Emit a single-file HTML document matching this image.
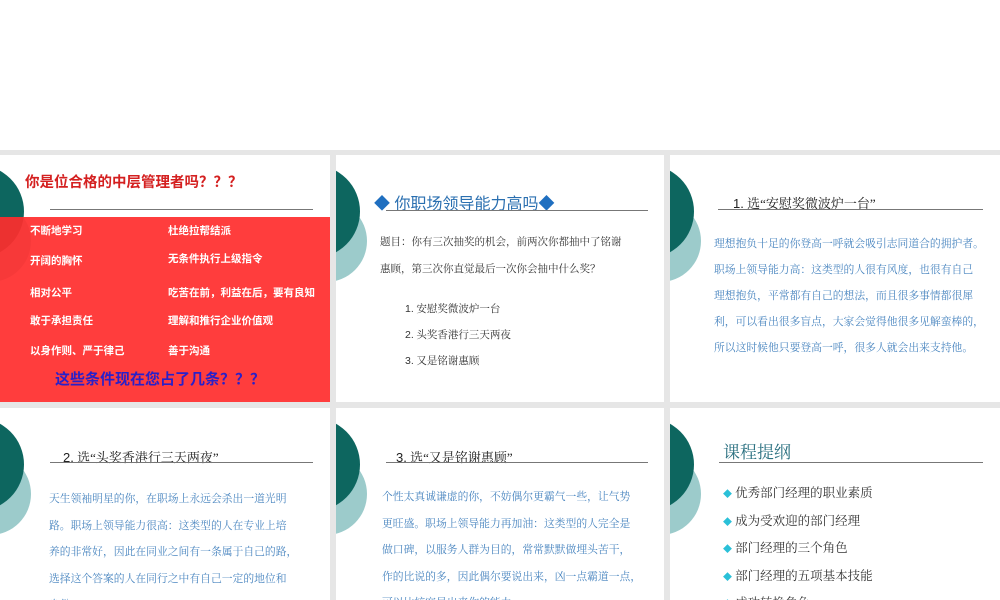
<!DOCTYPE html>
<html><head><meta charset="utf-8"><style>
*{margin:0;padding:0;box-sizing:border-box}
body{width:1000px;height:600px;background:#fff;position:relative;overflow:hidden;font-family:"Liberation Serif","Noto Serif CJK SC","Noto Sans CJK SC",serif}
.bg{position:absolute;left:0;top:150px;width:1000px;height:450px;background:#e6e6e6}
.s{position:absolute;background:#fff;overflow:hidden}
.c1{position:absolute;width:82px;height:82px;border-radius:50%;background:#9ccbcb;left:-51px;top:45px}
.c2{position:absolute;width:93px;height:93px;border-radius:50%;background:#0d665f;left:-69px;top:10px}
.t{position:absolute;white-space:nowrap}
.ln{position:absolute;height:1px;background:#777}
.b{color:#4a86c0;font-size:10.8px}
.sans{font-family:"Liberation Sans","Noto Sans CJK SC",sans-serif}
</style></head><body>
<div class="bg"></div>

<!-- slide 1 -->
<div class="s" style="left:0;top:155px;width:330px;height:247px">
<div class="c1"></div><div class="c2"></div>
<div class="t sans" style="left:25px;top:16px;font-size:14.5px;font-weight:bold;color:#d42020">你是位合格的中层管理者吗？？？</div>
<div class="ln" style="left:50px;top:54px;width:263px"></div>
<div style="position:absolute;left:0;top:62px;width:330px;height:185px;background:rgba(255,45,45,0.92)"></div>
<div class="sans" style="position:absolute;left:0;top:0;color:#fff;font-size:10.5px;font-weight:bold">
<div class="t" style="left:30px;top:68px">不断地学习</div>
<div class="t" style="left:168px;top:68px">杜绝拉帮结派</div>
<div class="t" style="left:30px;top:98px">开阔的胸怀</div>
<div class="t" style="left:168px;top:96px">无条件执行上级指令</div>
<div class="t" style="left:30px;top:130px">相对公平</div>
<div class="t" style="left:168px;top:130px">吃苦在前，利益在后，要有良知</div>
<div class="t" style="left:30px;top:158px">敢于承担责任</div>
<div class="t" style="left:168px;top:158px">理解和推行企业价值观</div>
<div class="t" style="left:30px;top:188px">以身作则、严于律己</div>
<div class="t" style="left:168px;top:188px">善于沟通</div>
</div>
<div class="t sans" style="left:55px;top:213px;color:#2a20c8;font-size:15px;font-weight:bold">这些条件现在您占了几条？？？</div>
</div>

<!-- slide 2 -->
<div class="s" style="left:336px;top:155px;width:328px;height:247px">
<div class="c1"></div><div class="c2"></div>
<div class="t sans" style="left:38px;top:35px;font-size:16px;color:#2a6fb0"><span style="color:#1f6fc0">◆</span> 你职场领导能力高吗<span style="color:#1f6fc0">◆</span></div>
<div class="ln" style="left:50px;top:55px;width:262px"></div>
<div class="t" style="left:44px;top:79px;font-size:10.5px;color:#333">题目：你有三次抽奖的机会，前两次你都抽中了铭谢</div>
<div class="t" style="left:44px;top:106px;font-size:10.5px;color:#333">惠顾，第三次你直觉最后一次你会抽中什么奖？</div>
<div class="t" style="left:69px;top:146px;font-size:10.5px;color:#333"><span class="sans">1.</span> 安慰奖微波炉一台</div>
<div class="t" style="left:69px;top:172px;font-size:10.5px;color:#333"><span class="sans">2.</span> 头奖香港行三天两夜</div>
<div class="t" style="left:69px;top:198px;font-size:10.5px;color:#333"><span class="sans">3.</span> 又是铭谢惠顾</div>
</div>

<!-- slide 3 -->
<div class="s" style="left:670px;top:155px;width:330px;height:247px">
<div class="c1"></div><div class="c2"></div>
<div class="t" style="left:63px;top:38px;font-size:13px;color:#222"><span class="sans">1.</span> 选“安慰奖微波炉一台”</div>
<div class="ln" style="left:48px;top:54px;width:265px"></div>
<div class="b" style="position:absolute;left:44px;top:76px;line-height:26px;width:280px;white-space:nowrap">理想抱负十足的你登高一呼就会吸引志同道合的拥护者。<br>职场上领导能力高：这类型的人很有风度，也很有自己<br>理想抱负，平常都有自己的想法，而且很多事情都很犀<br>利，可以看出很多盲点，大家会觉得他很多见解蛮棒的，<br>所以这时候他只要登高一呼，很多人就会出来支持他。</div>
</div>

<!-- row 2 slide 1 -->
<div class="s" style="left:0;top:408px;width:330px;height:192px">
<div class="c1"></div><div class="c2"></div>
<div class="t" style="left:63px;top:39px;font-size:13px;color:#222"><span class="sans">2.</span> 选“头奖香港行三天两夜”</div>
<div class="ln" style="left:50px;top:54px;width:263px"></div>
<div class="b" style="position:absolute;left:49px;top:78px;line-height:26.5px;white-space:nowrap">天生领袖明星的你，在职场上永远会杀出一道光明<br>路。职场上领导能力很高：这类型的人在专业上培<br>养的非常好，因此在同业之间有一条属于自己的路，<br>选择这个答案的人在同行之中有自己一定的地位和<br>身份。</div>
</div>

<!-- row 2 slide 2 -->
<div class="s" style="left:336px;top:408px;width:328px;height:192px">
<div class="c1"></div><div class="c2"></div>
<div class="t" style="left:60px;top:39px;font-size:13px;color:#222"><span class="sans">3.</span> 选“又是铭谢惠顾”</div>
<div class="ln" style="left:50px;top:54px;width:262px"></div>
<div class="b" style="position:absolute;left:46px;top:76px;line-height:26.5px;white-space:nowrap">个性太真诚谦虚的你，不妨偶尔更霸气一些，让气势<br>更旺盛。职场上领导能力再加油：这类型的人完全是<br>做口碑，以服务人群为目的，常常默默做埋头苦干，<br>作的比说的多，因此偶尔要说出来，凶一点霸道一点，<br>可以比较突显出来你的能力。</div>
</div>

<!-- row 2 slide 3 -->
<div class="s" style="left:670px;top:408px;width:330px;height:192px">
<div class="c1"></div><div class="c2"></div>
<div class="t" style="left:53px;top:30px;font-size:17px;color:#2a7080">课程提纲</div>
<div class="ln" style="left:49px;top:54px;width:264px"></div>
<div style="position:absolute;left:53px;top:72px;font-size:12.5px;color:#333;line-height:26.5px;white-space:nowrap">
<div><span style="color:#2ac0d8;font-size:9px">◆</span> 优秀部门经理的职业素质</div>
<div><span style="color:#2ac0d8;font-size:9px">◆</span> 成为受欢迎的部门经理</div>
<div><span style="color:#2ac0d8;font-size:9px">◆</span> 部门经理的三个角色</div>
<div><span style="color:#2ac0d8;font-size:9px">◆</span> 部门经理的五项基本技能</div>
<div><span style="color:#2ac0d8;font-size:9px">◆</span> 成功转换角色</div>
</div>
</div>
</body></html>
